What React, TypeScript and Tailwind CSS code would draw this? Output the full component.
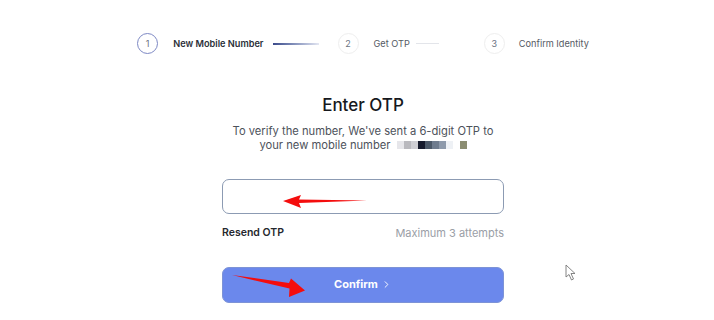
import { ChevronRight } from 'lucide-react';

const pixels = ['#e6e6ea', '#b9b9be', '#cfcfd4', '#161a2c', '#4b5868', '#6f7c8e', '#8e9aab', '#eef1f5', '#ffffff', '#8b8d72'];

export default function App() {
  return (
    <div className="relative w-[714px] h-[320px] bg-white overflow-hidden pl-3" style={{ fontFamily: 'Inter, "Noto Sans", sans-serif' }}>
      {/* stepper */}
      <div className="flex justify-center pt-[33px]">
        <div className="flex items-center text-[9.2px]">
          <div className="w-[21px] h-[21px] rounded-full border border-[#7d88c4] flex items-center justify-center text-[9px] text-gray-500">1</div>
          <span className="ml-[15px] font-semibold text-[#2b2f38]">New Mobile Number</span>
          <div className="ml-[9px] w-[46px] h-[2px] bg-gradient-to-r from-[#3b4a8a] to-[#e4e7f2]"></div>
          <div className="ml-[19px] w-[21px] h-[21px] rounded-full border border-[#eeeeee] flex items-center justify-center text-[9px] text-gray-500">2</div>
          <span className="ml-[15px] text-[#555a63]">Get OTP</span>
          <div className="ml-[6px] w-[23px] h-px bg-[#e3e5ea]"></div>
          <div className="ml-[45px] w-[21px] h-[21px] rounded-full border border-[#eeeeee] flex items-center justify-center text-[9px] text-gray-500">3</div>
          <span className="ml-[14px] text-[#555a63]">Confirm Identity</span>
        </div>
      </div>

      <div className="flex justify-center mt-[40px]">
        <div className="w-[282px] flex flex-col items-center">
          <h1 className="text-[17px] font-medium text-[#16181d] leading-[22px]">Enter OTP</h1>
          <p className="mt-[8px] text-[11.2px] leading-[14px] text-[#4d525b] text-center whitespace-nowrap">
            To verify the number, We've sent a 6-digit OTP to
          </p>
          <div className="flex items-center text-[11.2px] leading-[14px] text-[#4d525b]">
            <span>your new mobile number</span>
            <div className="ml-[6px] flex">
              {pixels.map((c, i) => (
                <div key={i} className="w-[7px] h-[8px]" style={{ backgroundColor: c }}></div>
              ))}
            </div>
          </div>

          <div className="mt-[27px] w-full h-[35px] rounded-[7px] border border-[#8c9bb3] bg-white"></div>

          <div className="mt-[11px] w-full flex justify-between items-center">
            <span className="text-[10.5px] font-semibold text-[#25282e]">Resend OTP</span>
            <span className="text-[11px] text-[#9a9ea6]">Maximum 3 attempts</span>
          </div>

          <button className="mt-[25px] w-full h-[36px] rounded-[7px] bg-[#6b88ec] border border-[#7d93d6] flex items-center justify-center gap-[3px] text-white text-[11px] font-bold">
            Confirm
            <ChevronRight className="w-[11px] h-[11px]" strokeWidth={2} />
          </button>
        </div>
      </div>

      {/* annotation arrows */}
      <svg className="absolute left-0 top-0 pointer-events-none" width="714" height="320" viewBox="0 0 714 320">
        <polygon points="283,201 301,195 299,199.5 367,200.5 299,203 301,208" fill="#f40d0d" />
        <polygon points="232,275 289,283 291,278.5 305,290.5 289,297 289.5,288.5" fill="#f40d0d" />
        <path d="M566,265 L566,277 L569,274.5 L571.5,280 L573.5,279 L571,273.5 L575,273.5 Z" fill="#fff" stroke="#777" strokeWidth="0.9" strokeLinejoin="round" />
      </svg>
    </div>
  );
}
